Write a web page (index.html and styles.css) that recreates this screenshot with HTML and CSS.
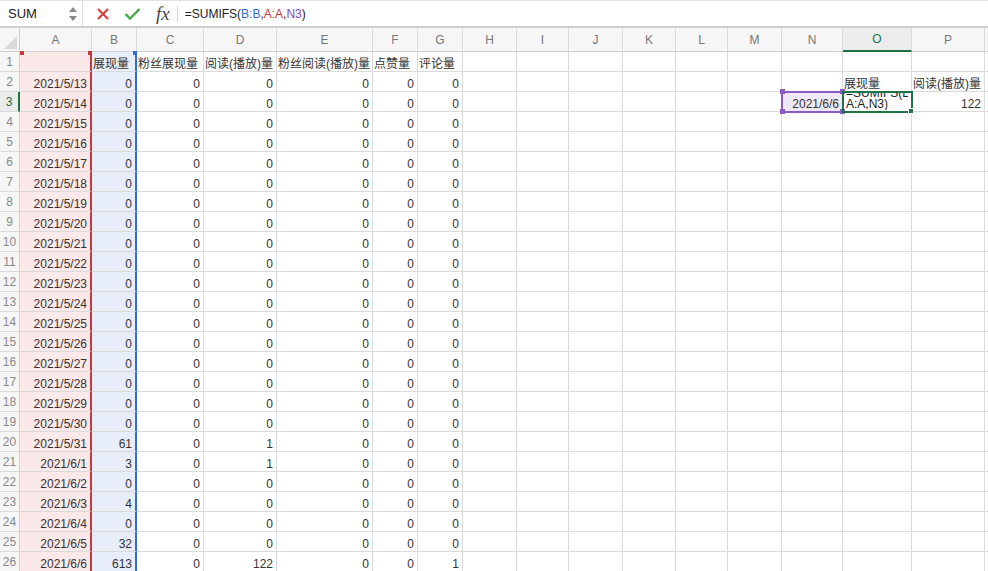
FILE: index.html
```html
<!DOCTYPE html>
<html lang="zh-CN">
<head>
    <meta charset="UTF-8">
    <title>SUMIFS</title>
    <link rel="stylesheet" href="styles.css">
</head>
<body>
    <!--编辑栏-->
    <div class="formula-bar">
        <div class="name-box">
            <span class="name">SUM</span>
            <span class="spin"><i class="up"></i><i class="down"></i></span>
        </div>
        <div class="bar-btns">
            <svg class="btn-cancel" width="14" height="14" viewBox="0 0 14 14">
                <path d="M2 2 L12 12 M12 2 L2 12" stroke="#d9413d" stroke-width="2.2" fill="none"/>
            </svg>
            <svg class="btn-enter" width="17" height="14" viewBox="0 0 17 14">
                <path d="M1.5 7 L6 11.5 L15.5 2" stroke="#46a84a" stroke-width="2.4" fill="none"/>
            </svg>
            <span class="fx">fx</span>
        </div>
        <div class="formula">=SUMIFS(<span class="ref-b">B:B</span>,<span class="ref-a">A:A</span>,<span class="ref-n">N3</span>)</div>
    </div>

    <!--表格-->
    <div class="sheet" id="sheet"></div>

    <script>
        (function () {
            var sheet = document.getElementById('sheet');
            var letters = 'ABCDEFGHIJKLMNOP'.split('');
            var head = ['', '展现量', '粉丝展现量', '阅读(播放)量', '粉丝阅读(播放)量', '点赞量', '评论量'];

            var dates = [];
            for (var d = 13; d <= 31; d ++) dates.push('2021/5/' + d);
            for (var e = 1; e <= 6; e ++) dates.push('2021/6/' + e);

            var bVals = {'2021/5/31': 61, '2021/6/1': 3, '2021/6/3': 4, '2021/6/5': 32, '2021/6/6': 613};
            var dVals = {'2021/5/31': 1, '2021/6/1': 1, '2021/6/6': 122};
            var gVals = {'2021/6/6': 1};

            function cell(cls, text) {
                var el = document.createElement('div');
                el.className = 'cell ' + cls;
                if (text !== undefined && text !== '') {
                    el.textContent = text;
                }
                sheet.appendChild(el);
                return el;
            }

            function handle(el, cls) {
                var h = document.createElement('span');
                h.className = 'handle ' + cls;
                el.appendChild(h);
            }

            // 列头
            cell('corner');
            letters.forEach(function (l) {
                cell('col-head' + (l === 'O' ? ' current' : ''), l);
            });
            cell('col-head');

            // 数据行
            for (var r = 1; r <= 26; r ++) {
                cell('row-head' + (r === 3 ? ' current' : ''), r);
                var date = dates[r - 2];
                for (var c = 0; c < 17; c ++) {
                    var cls = '';
                    var val = '';
                    if (c === 0) cls += ' col-a';
                    if (c === 1) cls += ' col-b';

                    if (r === 1 && c < 7) {
                        val = head[c];
                        cls += ' txt';
                    } else if (r > 1 && c < 7) {
                        cls += ' num';
                        if (c === 0) val = date;
                        else if (c === 1) val = bVals[date] || 0;
                        else if (c === 3) val = dVals[date] || 0;
                        else if (c === 6) val = gVals[date] || 0;
                        else val = 0;
                    }

                    if (r === 2 && c === 14) { val = '展现量'; cls += ' txt'; }
                    if (r === 2 && c === 15) { val = '阅读(播放)量'; cls += ' txt'; }
                    if (r === 3 && c === 13) { val = '2021/6/6'; cls += ' num ref-cell'; }
                    if (r === 3 && c === 15) { val = 122; cls += ' num'; }
                    if (r === 3 && c === 14) cls += ' active';

                    var el = cell(cls, val);

                    if (r === 1 && c === 0) {
                        handle(el, 'red tl');
                        handle(el, 'red tr');
                    }
                    if (r === 1 && c === 1) handle(el, 'blue tr');
                    if (r === 3 && c === 13) {
                        handle(el, 'purple tl');
                        handle(el, 'purple tr');
                        handle(el, 'purple bl');
                        handle(el, 'purple br');
                    }
                    if (r === 3 && c === 14) {
                        el.innerHTML = '<div class="edit">=SUMIFS(B:B,<br>A:A,N3)</div>';
                        handle(el, 'green br');
                    }
                }
            }
        })();
    </script>
</body>
</html>
```

FILE: styles.css
```css
* {
    margin: 0;
    padding: 0;
    box-sizing: border-box;
}
body {
    width: 988px;
    height: 571px;
    overflow: hidden;
    background: #fff;
    font-family: "Liberation Sans", "Noto Sans CJK SC", sans-serif;
    color: #333;
}

/* 编辑栏 */
.formula-bar {
    display: flex;
    align-items: center;
    height: 28px;
    border-top: 1px solid #e2e2e2;
    border-bottom: 2px solid #cfcfcf;
}
.name-box {
    display: flex;
    align-items: center;
    justify-content: space-between;
    width: 83px;
    height: 100%;
    padding: 0 5px 0 8px;
    border-right: 1px solid #dedede;
    font-size: 13px;
    color: #222;
}
.spin {
    display: flex;
    flex-direction: column;
    gap: 4px;
}
.spin i {
    display: block;
    width: 0;
    height: 0;
    border-left: 4px solid transparent;
    border-right: 4px solid transparent;
}
.spin .up {
    border-bottom: 5px solid #8a8a8a;
}
.spin .down {
    border-top: 5px solid #8a8a8a;
}
.bar-btns {
    display: flex;
    align-items: center;
    height: 16px;
    padding: 0 7px 0 13px;
    border-right: 1px solid #d4d4d4;
}
.btn-cancel {
    margin-right: 14px;
}
.btn-enter {
    margin-right: 15px;
}
.fx {
    font-family: "Liberation Serif", serif;
    font-style: italic;
    font-size: 19px;
    color: #444;
    line-height: 16px;
}
.formula {
    padding-left: 7px;
    font-size: 12px;
    color: #222;
}
.ref-b {
    color: #2e6fd1;
}
.ref-a {
    color: #c9353a;
}
.ref-n {
    color: #8347c2;
}

/* 表格 */
.sheet {
    display: grid;
    grid-template-columns: 20px 72px 45px 67px 73px 96px 45px 45px 54px 52px 54px 53px 52px 54px 61px 69px 73px 1fr;
    grid-template-rows: 24px;
    grid-auto-rows: 20px;
}
.cell {
    position: relative;
    display: flex;
    align-items: flex-end;
    padding: 0 3px 0;
    border-right: 1px solid #dadada;
    border-bottom: 1px solid #dadada;
    font-size: 12px;
    line-height: 14px;
    white-space: nowrap;
    color: #333;
}
.cell.num {
    justify-content: flex-end;
}
.cell.txt {
    padding-left: 1px;
}
.corner {
    background: #f6f6f6;
    border-right-color: #cfcfcf;
    border-bottom-color: #cfcfcf;
}
.corner::after {
    content: '';
    position: absolute;
    right: 2px;
    bottom: 2px;
    border-left: 13px solid transparent;
    border-bottom: 13px solid #d9d9d9;
}
.col-head {
    justify-content: center;
    align-items: center;
    padding: 0;
    background: #f6f6f6;
    border-bottom-color: #cfcfcf;
    color: #777;
}
.col-head.current {
    background: #ececec;
    color: #217346;
    border-bottom: 2px solid #217346;
}
.row-head {
    justify-content: center;
    align-items: center;
    padding: 0;
    background: #f6f6f6;
    border-right-color: #cfcfcf;
    color: #888;
}
.row-head.current {
    background: #ececec;
    color: #217346;
    border-right: 2px solid #217346;
}

/* 公式引用区域 */
.col-a {
    background: #fbe9e9;
    border-right: 2px solid #c6393e;
}
.col-b {
    background: #e7eef9;
    border-right: 2px solid #2e6fd1;
}
.ref-cell {
    z-index: 2;
    background: #efe9f7;
    outline: 2px solid #8a5cc6;
    outline-offset: -1px;
}
.active {
    z-index: 3;
    outline: 2px solid #217346;
    outline-offset: -1px;
    padding: 0 3px 1px;
}
.edit {
    height: 18px;
    overflow: hidden;
    display: flex;
    flex-direction: column;
    justify-content: flex-end;
    line-height: 11px;
    color: #222;
}

.handle {
    position: absolute;
    width: 5px;
    height: 5px;
}
.handle.red {
    background: #c6393e;
    width: 4px;
    height: 4px;
}
.handle.blue {
    background: #2e6fd1;
    width: 4px;
    height: 4px;
}
.handle.purple {
    background: #8a5cc6;
}
.handle.green {
    background: #217346;
    border: 1px solid #fff;
    width: 6px;
    height: 6px;
}
.handle.tl {
    left: -1px;
    top: -1px;
}
.handle.tr {
    right: -2px;
    top: -1px;
}
.handle.bl {
    left: -2px;
    bottom: -3px;
}
.handle.br {
    right: -3px;
    bottom: -3px;
}
.red.tl {
    left: 0;
}
.red.tr,
.blue.tr {
    right: -2px;
}
.purple.tl {
    left: -2px;
    top: -3px;
}
.purple.tr {
    right: -3px;
    top: -3px;
}
```
